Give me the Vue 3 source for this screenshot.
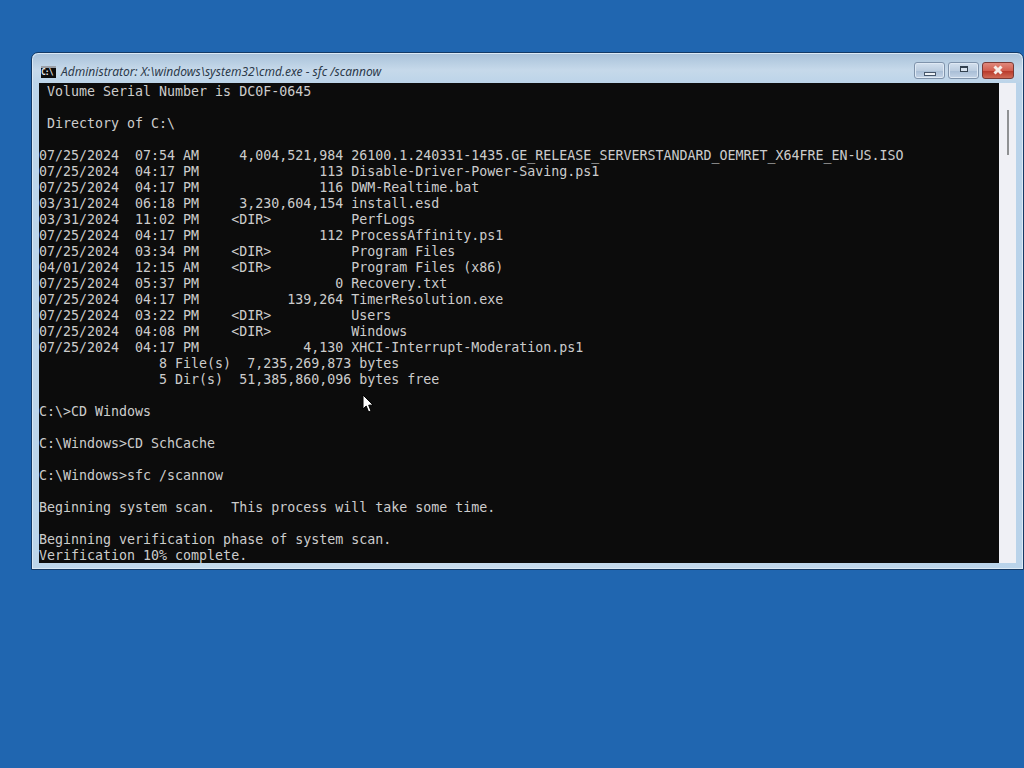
<script setup>
const lines = [
  " Volume Serial Number is DC0F-0645",
  "",
  " Directory of C:\\",
  "",
  "07/25/2024  07:54 AM     4,004,521,984 26100.1.240331-1435.GE_RELEASE_SERVERSTANDARD_OEMRET_X64FRE_EN-US.ISO",
  "07/25/2024  04:17 PM               113 Disable-Driver-Power-Saving.ps1",
  "07/25/2024  04:17 PM               116 DWM-Realtime.bat",
  "03/31/2024  06:18 PM     3,230,604,154 install.esd",
  "03/31/2024  11:02 PM    <DIR>          PerfLogs",
  "07/25/2024  04:17 PM               112 ProcessAffinity.ps1",
  "07/25/2024  03:34 PM    <DIR>          Program Files",
  "04/01/2024  12:15 AM    <DIR>          Program Files (x86)",
  "07/25/2024  05:37 PM                 0 Recovery.txt",
  "07/25/2024  04:17 PM           139,264 TimerResolution.exe",
  "07/25/2024  03:22 PM    <DIR>          Users",
  "07/25/2024  04:08 PM    <DIR>          Windows",
  "07/25/2024  04:17 PM             4,130 XHCI-Interrupt-Moderation.ps1",
  "               8 File(s)  7,235,269,873 bytes",
  "               5 Dir(s)  51,385,860,096 bytes free",
  "",
  "C:\\>CD Windows",
  "",
  "C:\\Windows>CD SchCache",
  "",
  "C:\\Windows>sfc /scannow",
  "",
  "Beginning system scan.  This process will take some time.",
  "",
  "Beginning verification phase of system scan.",
  "Verification 10% complete."
];
</script>

<template>
  <div class="desktop">
    <div class="window">
      <div class="titlebar">
        <div class="appicon"><span>C:\</span></div>
        <div class="title">Administrator: X:\windows\system32\cmd.exe - sfc /scannow</div>
        <div class="controls">
          <div class="btn"><i class="min-glyph"></i></div>
          <div class="btn"><i class="max-glyph"></i></div>
          <div class="btn close">
            <svg width="16" height="12" viewBox="0 0 16 12"><path d="M4.5 2.5 L11.5 9.5 M11.5 2.5 L4.5 9.5" stroke="#f6eeea" stroke-width="3" fill="none"/></svg>
          </div>
        </div>
      </div>
      <div class="client">
        <div class="console"><div v-for="(l, i) in lines" :key="i" class="row">{{ l }}</div></div>
        <div class="scrollbar"><div class="thumb"></div></div>
      </div>
    </div>
    <svg class="cursor" width="12" height="20" viewBox="0 0 12 20">
      <path d="M1 1 L1 15 L4.2 12 L6.6 18 L9 17 L6.7 11.2 L11 11 Z" fill="#fff" stroke="#000" stroke-width="1"/>
    </svg>
  </div>
</template>

<style>
html, body { margin: 0; background: #2066b0; }
</style>

<style scoped>
.desktop {
  position: relative;
  width: 1024px;
  height: 768px;
  overflow: hidden;
  background: #2066b0;
}
.window {
  position: absolute;
  left: 31px;
  top: 52px;
  width: 993px;
  height: 518px;
  box-sizing: border-box;
  display: flex;
  flex-direction: column;
  border: 1px solid #143a66;
  border-radius: 7px 7px 0 0;
  background: linear-gradient(90deg, #bcd5ea 0%, #c8dcee 40%, #b9d3ea 100%);
  box-shadow: inset 0 0 0 1px #dbe9f5;
}
.titlebar {
  height: 29px;
  flex: none;
  display: flex;
  align-items: center;
  padding: 6px 8px 0 8px;
  box-sizing: border-box;
  background: linear-gradient(180deg, #a9c2da 0%, #c6d9ea 55%, #bcd4e9 100%);
  border-radius: 6px 6px 0 0;
  margin: 1px 1px 0 1px;
}
.appicon {
  width: 15px;
  height: 12px;
  background: #0c0c0c;
  border-top: 2px solid #9a9fa6;
  box-sizing: border-box;
  overflow: hidden;
  flex: none;
}
.appicon span {
  display: block;
  font: bold 8px/10px "DejaVu Sans Mono", monospace;
  letter-spacing: -1px;
  color: #e8e8e8;
}
.title {
  margin-left: 5px;
  font: italic 12.04px/16px "Noto Sans", sans-serif;
  color: #2c3a4b;
  white-space: nowrap;
  flex: 1;
}
.controls {
  display: flex;
  gap: 3px;
  margin-top: -3px;
}
.btn {
  width: 31px;
  height: 17px;
  box-sizing: border-box;
  border: 1px solid #7f93ab;
  border-radius: 3px;
  background: linear-gradient(180deg, #d3e0ee 0%, #bccde0 50%, #a9bed6 55%, #c3d3e6 100%);
  box-shadow: inset 0 0 0 1px #dfe9f4;
  display: flex;
  align-items: center;
  justify-content: center;
}
.close {
  width: 32px;
  border-color: #7a3a35;
  background: linear-gradient(180deg, #e0897c 0%, #d25f50 50%, #b93a2b 55%, #cf6a56 100%);
  box-shadow: none;
}
.min-glyph {
  display: block;
  width: 10px;
  height: 2px;
  margin-top: 7px;
  background: #eef3f8;
  border: 1px solid #47566a;
}
.max-glyph {
  display: block;
  width: 6px;
  height: 3px;
  margin-top: -2px;
  background: #d7e2ee;
  border: 1px solid #33414f;
  border-top-width: 2px;
}
.client {
  flex: 1;
  display: flex;
  margin: 0 7px 6px 7px;
  min-height: 0;
}
.console {
  width: 960px;
  height: 480px;
  flex: none;
  background: #0c0c0c;
  color: #cccccc;
  font: 13.3px/16px "DejaVu Sans Mono", monospace;
  white-space: pre;
  overflow: hidden;
}
.row {
  height: 16px;
  line-height: 18px;
}
.scrollbar {
  width: 17px;
  flex: none;
  height: 480px;
  background: #eff0f5;
  position: relative;
}
.thumb {
  position: absolute;
  left: 8px;
  top: 27px;
  width: 2px;
  height: 45px;
  background: #8f9193;
}
.cursor {
  position: absolute;
  left: 362px;
  top: 394px;
}
</style>
